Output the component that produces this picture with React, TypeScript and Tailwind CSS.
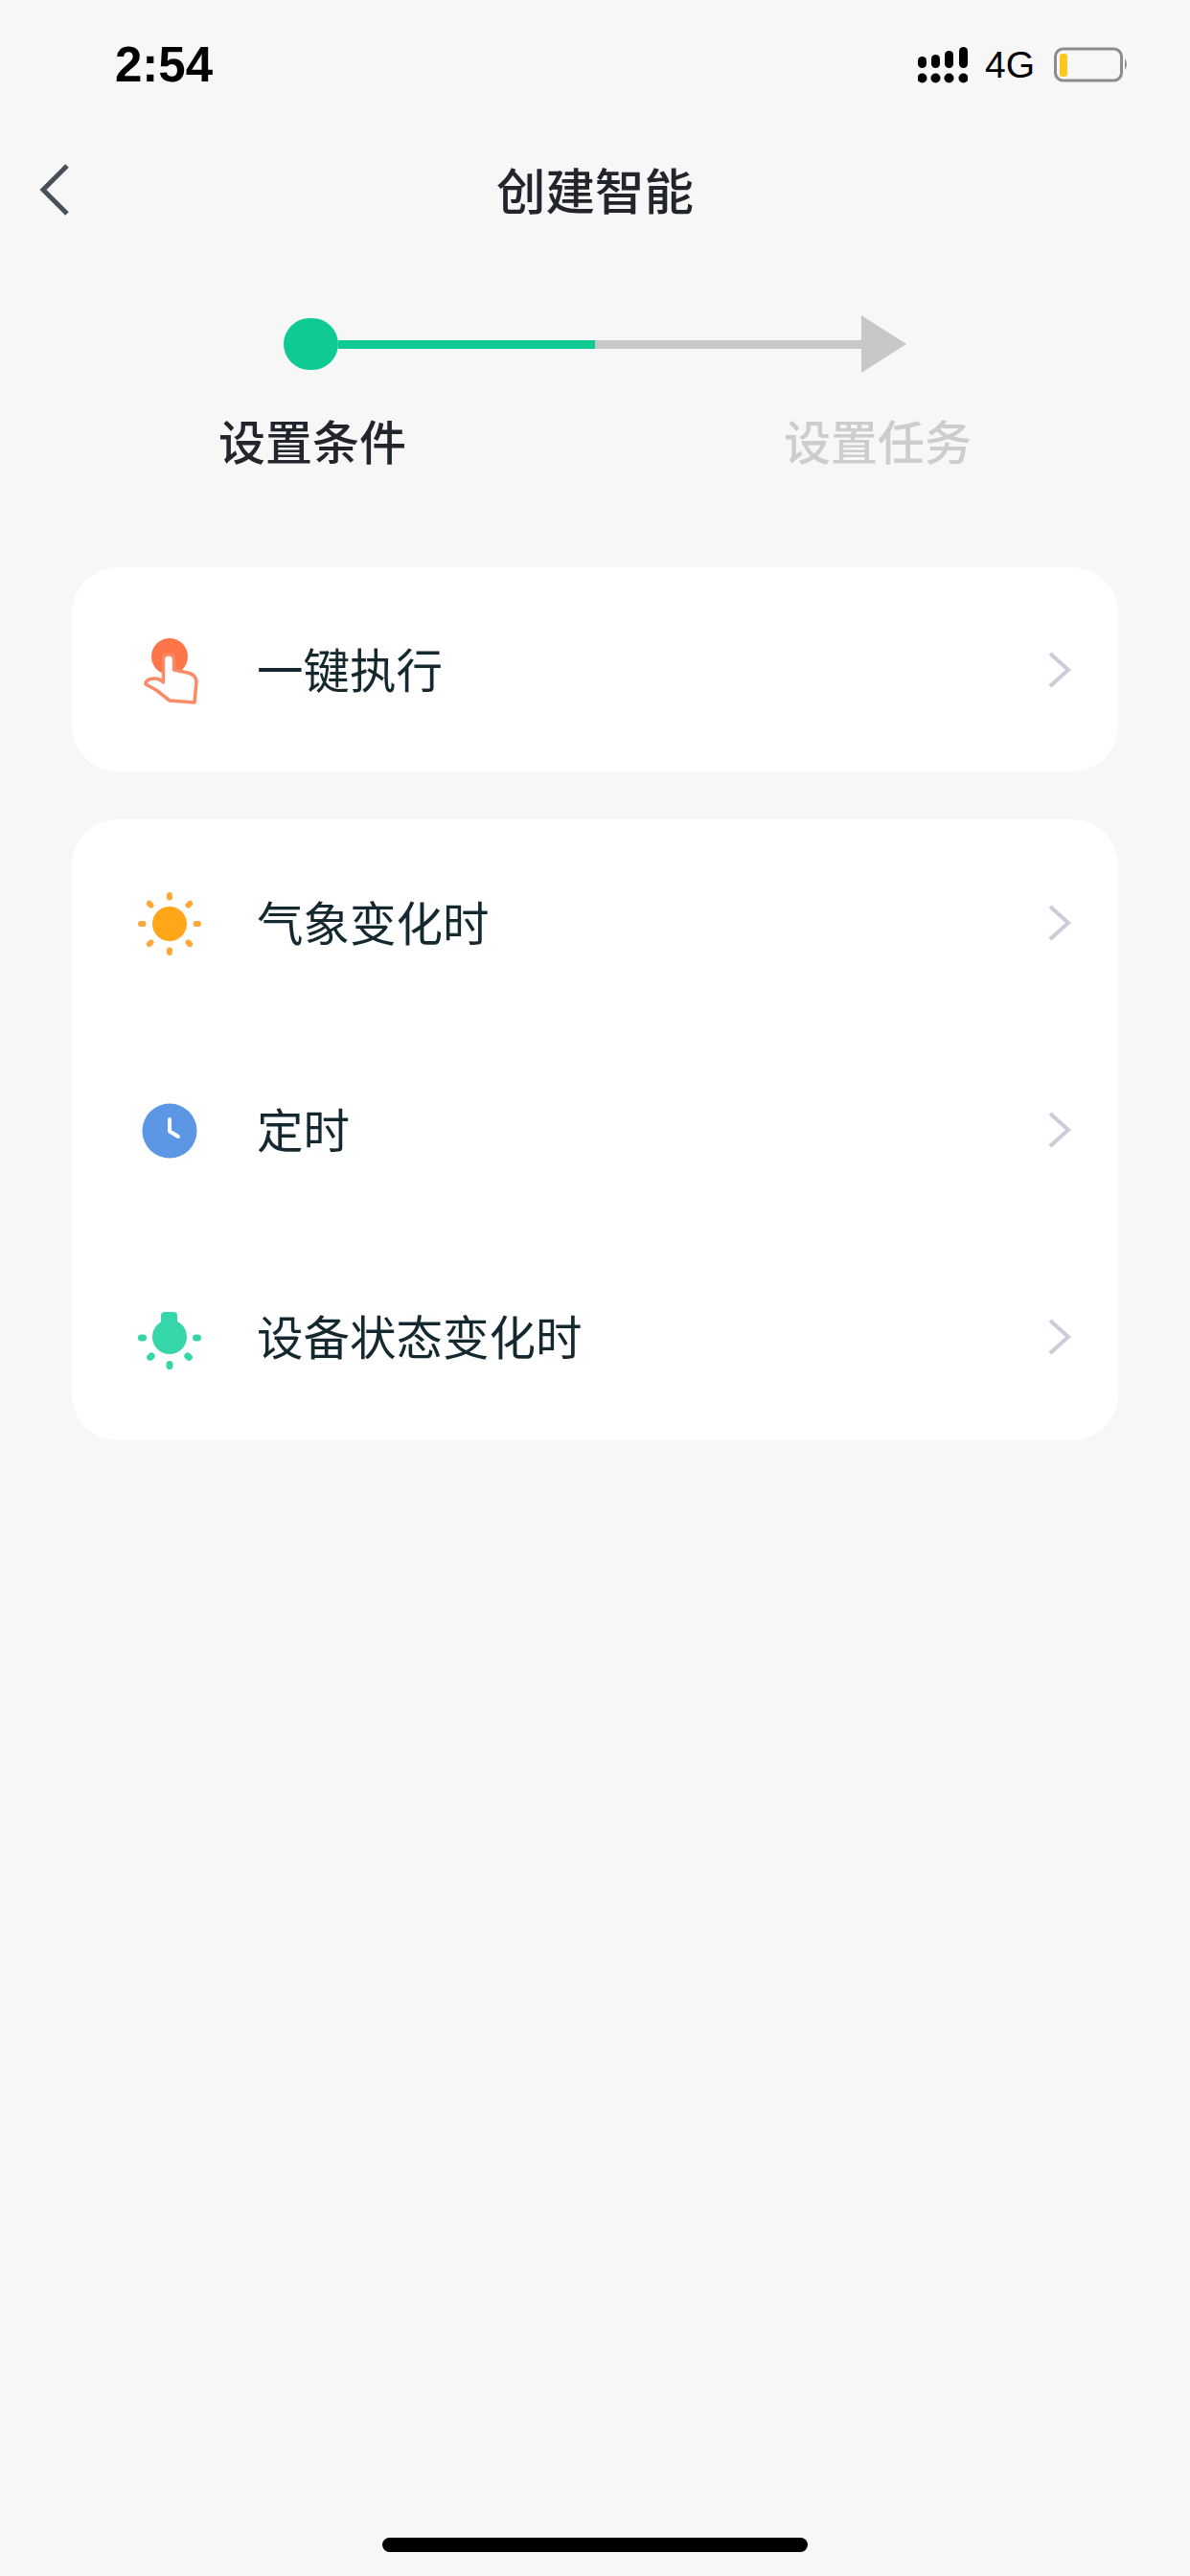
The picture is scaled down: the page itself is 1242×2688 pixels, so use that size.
const rows = [
  { label: "气象变化时", icon: <SunIcon /> },
  { label: "定时", icon: <ClockIcon /> },
  { label: "设备状态变化时", icon: <BulbIcon /> },
]

function HandIcon() {
  return (
    <svg viewBox="0 8 100 100" className="h-[100px] w-[100px]">
      <circle cx="57" cy="44" r="19" fill="#fe7549" />
      <path
        d="M50.500 71V47q0-5 5.500-5t5.500 5V58L76 61q9 2 9 10L83 92 57 90 43 79 32 73q0-6 10-6 4 0 8.500 4Z"
        fill="#fff"
        stroke="#fb8a66"
        strokeWidth="3.500"
        strokeLinejoin="round"
      />
    </svg>
  )
}

function SunIcon() {
  const rays = [0, 45, 90, 135, 180, 225, 270, 315]
  return (
    <svg viewBox="0 2 100 100" className="h-[100px] w-[100px]">
      <circle cx="57" cy="53" r="18" fill="#ffa619" />
      {rays.map((r) => (
        <rect key={r} x="54" y="20" width="6" height="8.500" rx="3" fill="#ffa93a" transform={`rotate(${r} 57 53)`} />
      ))}
    </svg>
  )
}

function ClockIcon() {
  return (
    <svg viewBox="0 -2 100 100" className="h-[100px] w-[100px]">
      <circle cx="57" cy="49" r="28.500" fill="#5b97e5" />
      <path d="M57 37V49.500L66 55" fill="none" stroke="#fff" strokeWidth="4" strokeLinecap="round" strokeLinejoin="round" />
    </svg>
  )
}

function BulbIcon() {
  return (
    <svg viewBox="0 -1 100 100" className="h-[100px] w-[100px]">
      <path d="M48 27q0-4 4-4h9q4 0 4 4v8H48Z" fill="#36d6ab" />
      <circle cx="57" cy="49" r="18" fill="#36d6ab" />
      <rect x="24" y="46.500" width="9" height="7" rx="3.500" fill="#36d6ab" />
      <rect x="81" y="46.500" width="9" height="7" rx="3.500" fill="#36d6ab" />
      <rect x="33" y="66.500" width="9" height="7" rx="3.500" fill="#36d6ab" transform="rotate(-40 37 70)" />
      <rect x="72" y="66.500" width="9" height="7" rx="3.500" fill="#36d6ab" transform="rotate(40 77 70)" />
      <rect x="53.500" y="74" width="7" height="9" rx="3.500" fill="#36d6ab" />
    </svg>
  )
}

function Chevron() {
  return (
    <svg viewBox="0 0 24 38" className="h-[38px] w-[24px]">
      <path d="M2 2 21 19 2 36" fill="none" stroke="#c9ccd6" strokeWidth="4" />
    </svg>
  )
}

function Row({ label, icon, height }: { label: string; icon: React.ReactNode; height: string }) {
  return (
    <div className={`flex items-center pl-[45px] pr-[49px] ${height}`}>
      <div className="w-[148px] shrink-0">{icon}</div>
      <span className="flex-1 pb-[3px] text-[48.500px] leading-none text-[#14282f]">{label}</span>
      <Chevron />
    </div>
  )
}

function StatusBar() {
  return (
    <div className="flex h-[136px] items-start justify-between pl-[120px] pr-[64px] pt-[45px]">
      <span className="font-['Liberation_Sans'] text-[51px] font-bold leading-[46px] text-black">2:54</span>
      <div className="flex items-center pt-[3px]">
        <svg viewBox="0 0 52 38" className="h-[38px] w-[52px]">
          <g fill="#000">
            <rect x="0" y="10" width="9" height="12" rx="4.500" />
            <rect x="14" y="8" width="9" height="14" rx="4.500" />
            <rect x="28" y="4" width="9" height="18" rx="4.500" />
            <rect x="43" y="0" width="9" height="22" rx="4.500" />
            <circle cx="4.500" cy="32.500" r="5" />
            <circle cx="18.500" cy="32.500" r="5" />
            <circle cx="32.500" cy="32.500" r="5" />
            <circle cx="47.500" cy="32.500" r="5" />
          </g>
        </svg>
        <span className="ml-[18px] font-['Liberation_Sans'] text-[39px] leading-none text-black">4G</span>
        <svg viewBox="0 0 78 38" className="ml-[20px] h-[38px] w-[78px]">
          <rect x="1.500" y="2" width="69" height="33" rx="8" fill="none" stroke="#8c8c8c" strokeWidth="3" />
          <rect x="6" y="7" width="8" height="24" rx="3" fill="#fdc621" />
          <path d="M74 12q4 6 0 12Z" fill="#8c8c8c" />
        </svg>
      </div>
    </div>
  )
}

export default function App() {
  return (
    <div className="h-[2688px] w-[1242px] overflow-hidden bg-[#f7f7f8] font-['Noto_Sans_CJK_SC','Liberation_Sans',sans-serif]">
      <StatusBar />

      <div className="relative flex h-[124px] items-center justify-center">
        <svg viewBox="0 0 34 56" className="absolute left-[40px] top-[34px] h-[56px] w-[34px]">
          <path d="M30 3 5 28 30 53" fill="none" stroke="#474f57" strokeWidth="5" />
        </svg>
        <h1 className="pb-[2px] text-[51.500px] font-medium leading-none text-[#22252c]">创建智能</h1>
      </div>

      <div className="flex flex-col items-center pt-[69px]">
        <div className="flex h-[60px] w-[650px] items-center">
          <div className="h-[54px] w-[57px] shrink-0 rounded-full bg-[#0fcb93]" />
          <div className="h-[9px] w-[268px] bg-[#0fcb93]" />
          <div className="h-[9px] w-[278px] bg-[#c8c8c8]" />
          <div className="h-0 w-0 border-y-[30px] border-l-[47px] border-y-transparent border-l-[#c8c8c8]" />
        </div>
        <div className="mt-[40px] flex w-[786px] justify-between text-[49px] font-medium leading-[60px]">
          <span className="text-[#22252c]">设置条件</span>
          <span className="text-[#cdcdcd]">设置任务</span>
        </div>
      </div>

      <div className="mx-[75px] mt-[103px] flex flex-col gap-[50px]">
        <div className="rounded-[48px] bg-white">
          <Row label="一键执行" icon={<HandIcon />} height="h-[213px]" />
        </div>
        <div className="rounded-[48px] bg-white">
          {rows.map((row) => (
            <Row key={row.label} label={row.label} icon={row.icon} height="h-[216px]" />
          ))}
        </div>
      </div>

      <div className="mx-auto mt-[1145px] h-[15px] w-[444px] rounded-full bg-black" />
    </div>
  )
}
